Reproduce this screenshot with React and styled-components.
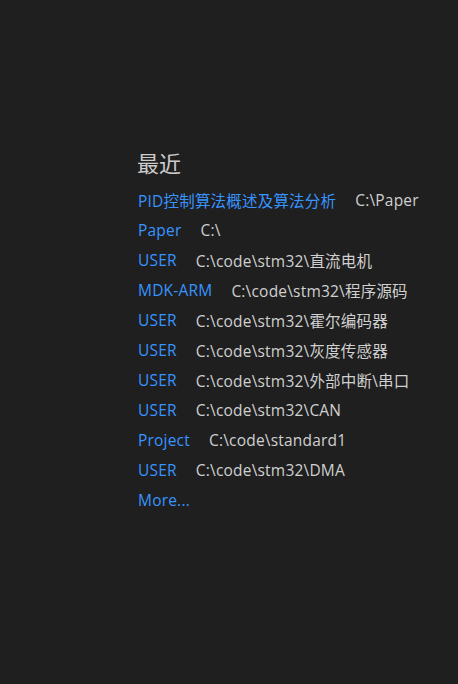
import React from "react";
import styled, { createGlobalStyle } from "styled-components";

const Global = createGlobalStyle`
  html, body { margin: 0; padding: 0; background: #1f1f1f; }
  body { font-family: "Open Sans", "Noto Sans", "Noto Sans CJK SC", sans-serif; }
`;

const Page = styled.div`
  width: 458px;
  height: 684px;
  background: #1f1f1f;
  box-sizing: border-box;
  padding: 146px 0 0 137px;
`;

const Title = styled.h2`
  margin: 0 0 7px 0;
  font-weight: 400;
  font-size: 22px;
  line-height: 32px;
  color: #cccccc;
  font-family: "Noto Sans CJK SC", sans-serif;
`;

const List = styled.ul`
  list-style: none;
  margin: 0;
  padding: 0 0 0 1px;
`;

const Row = styled.li`
  display: flex;
  align-items: center;
  height: 30px;
  font-size: 15.5px;
  letter-spacing: 0.2px;
  white-space: nowrap;
`;

const Link = styled.a`
  color: #3794ff;
  text-decoration: none;
  font-family: "Open Sans", "Noto Sans CJK SC", sans-serif;
`;

const Path = styled.span`
  color: #d0d0d0;
  padding-left: 19px;
  font-family: "Open Sans", "Noto Sans CJK SC", sans-serif;
`;

const items = [
  ["PID控制算法概述及算法分析", "C:\\Paper"],
  ["Paper", "C:\\"],
  ["USER", "C:\\code\\stm32\\直流电机"],
  ["MDK-ARM", "C:\\code\\stm32\\程序源码"],
  ["USER", "C:\\code\\stm32\\霍尔编码器"],
  ["USER", "C:\\code\\stm32\\灰度传感器"],
  ["USER", "C:\\code\\stm32\\外部中断\\串口"],
  ["USER", "C:\\code\\stm32\\CAN"],
  ["Project", "C:\\code\\standard1"],
  ["USER", "C:\\code\\stm32\\DMA"],
];

export default function App() {
  return (
    <Page>
      <Global />
      <Title>最近</Title>
      <List>
        {items.map(([name, path], i) => (
          <Row key={i}>
            <Link href="#">{name}</Link>
            <Path>{path}</Path>
          </Row>
        ))}
        <Row>
          <Link href="#">More...</Link>
        </Row>
      </List>
    </Page>
  );
}
